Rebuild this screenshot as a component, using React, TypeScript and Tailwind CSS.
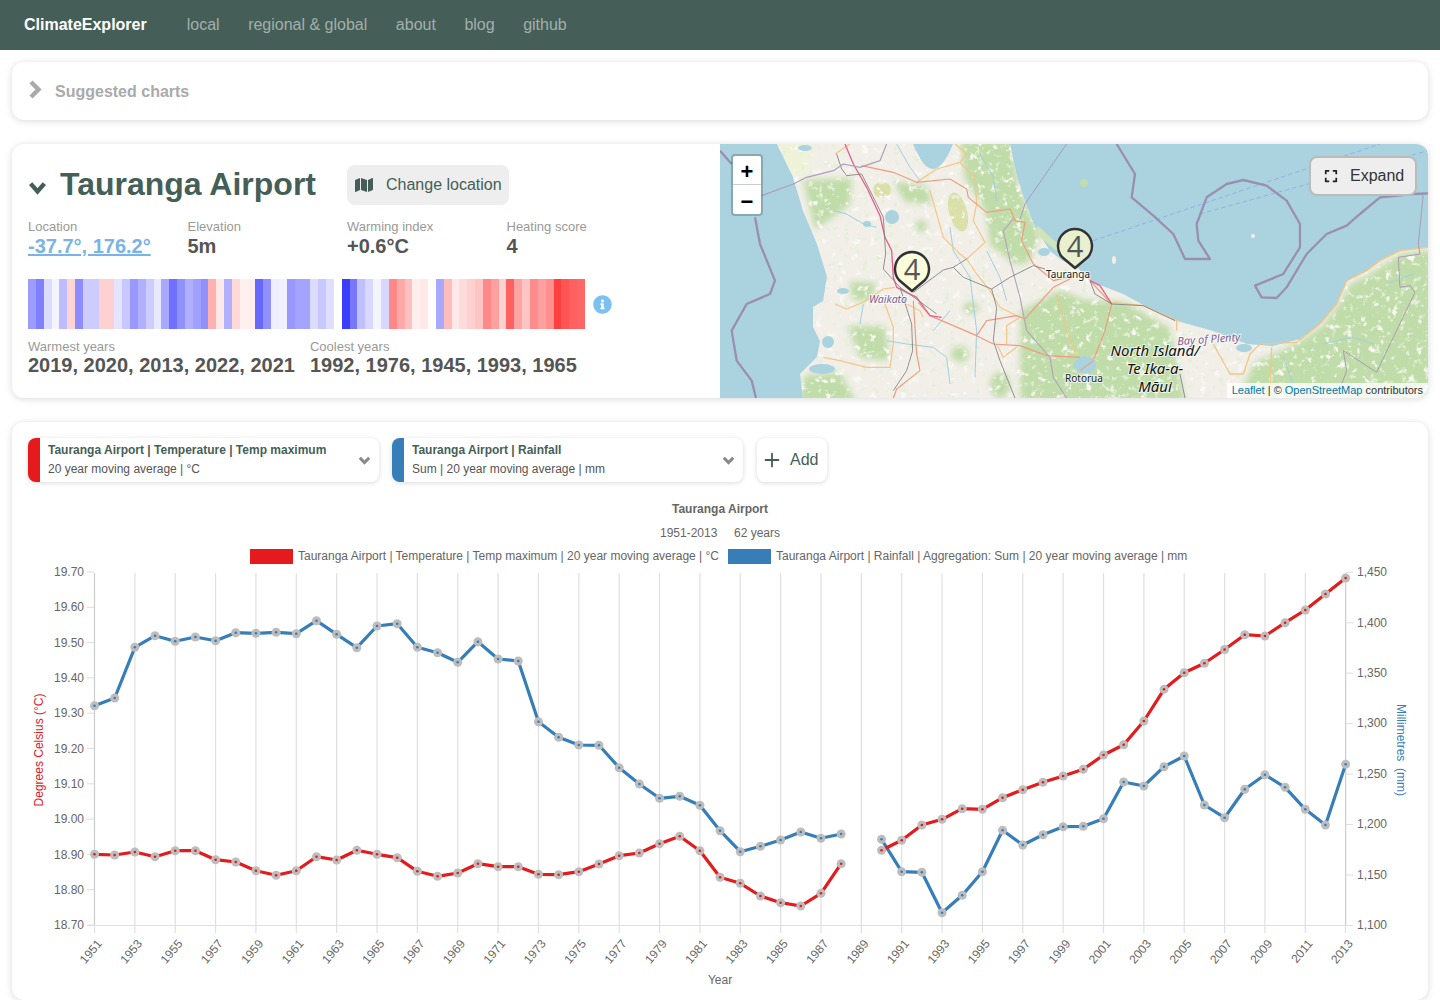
import { FaExpand, FaInfoCircle, FaMap } from "react-icons/fa";
import { Plus } from "lucide-react";

// warming stripes, 1951 on
const stripes = [
  "#9c9cff", "#8080ff", "#dcdcff", "#f4f4ff", "#bcbcff", "#ffd4d4", "#8c8cff", "#ccccff", "#ccccff", "#ffd0d0",
  "#ffd0d0", "#e4e4ff", "#c8c8ff", "#9898ff", "#b0b0ff", "#ccccff", "#e8e8ff", "#a8a8ff", "#7070ff", "#9090ff",
  "#b0b0ff", "#a0a0ff", "#9090ff", "#ffb0b0", "#ffe8e8", "#b0b0ff", "#ffd8d8", "#fff0f0", "#ffeeee", "#6868ff",
  "#9090ff", "#eeeeff", "#f0f0ff", "#9898ff", "#a4a4ff", "#a4a4ff", "#dcdcff", "#c8c8ff", "#dedeff", "#ffffff",
  "#3c3cff", "#7878ff", "#c0c0ff", "#d8d8ff", "#f4f4ff", "#d8d8ff", "#ff8888", "#ffa8a8", "#ffc0c0", "#ffeeee",
  "#ffe8e8", "#fffcfc", "#a8a8ff", "#ffbcbc", "#ffe8e8", "#ffdcdc", "#ffd0d0", "#ffc4c4", "#ff8888", "#ffa0a0",
  "#ffd0d0", "#ff6060", "#ffa4a4", "#ffc4c4", "#ff8c8c", "#ffa0a0", "#ff9090", "#ff4040", "#ff5555", "#ff6060",
  "#ff6666",
];

// y positions by year, 1951-2013; null for the gap in 1989
const red = [
  854.3, 855, 852, 856.7, 850.7, 850.7, 859.7, 862, 870.7, 875.3, 870.7, 856.7, 860, 850.3, 854.3, 857.7, 871.3, 876.3,
  873, 863.7, 866.7, 866.7, 874.3, 874.7, 871.7, 864, 855.7, 853, 843.7, 836.3, 850.7, 877.3, 883.3, 896, 902.7, 906,
  893.3, 863.7, null, 850.2, 840.2, 825, 819.3, 808.7, 809.3, 797.7, 789.7, 782.3, 776, 769.3, 755, 744.7, 721, 689.3,
  672.7, 663.3, 649.5, 634.7, 636, 622.7, 610, 594, 578,
];
const blue = [
  705.7, 698, 647.3, 635.7, 641.3, 637, 640.7, 632.7, 633.3, 632.3, 633.7, 620.7, 634.3, 647.7, 626, 623.7, 647.3,
  652.7, 662.3, 641.7, 659, 661, 721.7, 737.3, 745, 745.3, 767.7, 784, 798.3, 796.3, 805.3, 830.7, 851.7, 846.3, 840,
  832, 838.3, 834, null, 839.3, 871.7, 872.3, 912.7, 895.3, 871.7, 830.3, 845, 834.7, 826.7, 826.3, 818.7, 782, 786,
  766.7, 756, 805, 817.7, 789.3, 774.7, 787.3, 809.3, 825, 764.3,
];

const xOf = (i: number) => 94.5 + i * 20.18;

function segments(data: (number | null)[]) {
  const out: string[] = [];
  let cur: string[] = [];
  data.forEach((y, i) => {
    if (y === null) {
      out.push(cur.join(" "));
      cur = [];
    } else cur.push(`${xOf(i)},${y}`);
  });
  out.push(cur.join(" "));
  return out;
}

function Series({ data, color }: { data: (number | null)[]; color: string }) {
  return (
    <g>
      {segments(data).map((pts) => (
        <polyline key={pts} points={pts} fill="none" stroke={color} strokeWidth={3.2} strokeLinejoin="round" />
      ))}
      {data.map((y, i) =>
        y === null ? null : (
          <g key={i}>
            <circle cx={xOf(i)} cy={y} r={4.5} fill="#bdbdbd" />
            <circle cx={xOf(i)} cy={y} r={1.3} fill={color} />
          </g>
        )
      )}
    </g>
  );
}

function Chart() {
  const left = ["19.70", "19.60", "19.50", "19.40", "19.30", "19.20", "19.10", "19.00", "18.90", "18.80", "18.70"];
  const right = ["1,450", "1,400", "1,350", "1,300", "1,250", "1,200", "1,150", "1,100"];
  const years = Array.from({ length: 32 }, (_, i) => 1951 + i * 2);
  return (
    <svg viewBox="12 482 1416 518" className="block w-[1416px] h-[518px] -mx-4 text-[12px]" fill="#666">
      <text x={720} y={513} textAnchor="middle" fontWeight="bold">Tauranga Airport</text>
      <text x={720} y={537} textAnchor="middle" xmlSpace="preserve">1951-2013     62 years</text>
      <rect x={250} y={549} width={43} height={15} fill="#e41a1c" />
      <text x={298} y={560}>Tauranga Airport | Temperature | Temp maximum | 20 year moving average | °C</text>
      <rect x={728} y={549} width={43} height={15} fill="#377eb8" />
      <text x={776} y={560}>Tauranga Airport | Rainfall | Aggregation: Sum | 20 year moving average | mm</text>

      {years.map((_, i) => (
        <line key={i} x1={xOf(i * 2)} x2={xOf(i * 2)} y1={573} y2={i === 0 || i === 31 ? 925 : 933} stroke={i === 0 || i === 31 ? "#ccc" : "#e0e0e0"} strokeWidth={1.2} />
      ))}
      <line x1={94.5} x2={94.5} y1={925} y2={933} stroke="#e0e0e0" strokeWidth={1.2} />
      <line x1={1345.5} x2={1345.5} y1={925} y2={933} stroke="#e0e0e0" strokeWidth={1.2} />
      <line x1={87} x2={1353} y1={925.5} y2={925.5} stroke="#e0e0e0" />

      {left.map((t, i) => {
        const y = 572 + i * 35.3;
        return (
          <g key={t}>
            <line x1={87} x2={94} y1={y} y2={y} stroke="#ddd" />
            <text x={84} y={y + 4.1} textAnchor="end">{t}</text>
          </g>
        );
      })}
      {right.map((t, i) => {
        const y = 572.3 + i * 50.45;
        return (
          <g key={t}>
            <line x1={1346} x2={1353} y1={y} y2={y} stroke="#ddd" />
            <text x={1357} y={y + 3.8}>{t}</text>
          </g>
        );
      })}
      {years.map((y, i) => (
        <text key={y} x={0} y={0} textAnchor="end" transform={`translate(${xOf(i * 2) + 8} 944) rotate(-50)`}>{y}</text>
      ))}

      <text transform="translate(43 750) rotate(-90)" textAnchor="middle" fill="#e41a1c">Degrees Celsius (°C)</text>
      <text transform="translate(1397 750) rotate(90)" textAnchor="middle" fill="#377eb8" xmlSpace="preserve">Millimetres  (mm)</text>
      <text x={720} y={984} textAnchor="middle">Year</text>

      <Series data={blue} color="#377eb8" />
      <Series data={red} color="#e41a1c" />
    </svg>
  );
}

// roads and boundaries are traced off 3x crops, so they stay in crop units
const salmonW = [
  "M425 65L520 85L590 115L690 105L740 135L745 160L800 205L870 195L885 230L915 235L905 290L940 360L1000 410L1065 395",
  "M595 475L630 515L700 545L770 575L800 530L890 515L915 525L1000 430L1060 400",
  "M580 470L590 630L600 680L530 735L520 762",
  "M770 575L820 600L900 605L980 635L1080 640",
];
const orangeW = [
  "M590 115L650 75L720 55L740 30L705 0",
  "M720 55L765 100L770 180L760 230L795 295L740 345L770 390L810 440L840 490L890 515",
  "M630 140L670 280L720 330L740 345",
  "M345 480L380 495L430 475L490 435L525 430",
  "M495 480L520 550L520 600L510 670L440 670L360 650L310 640",
  "M860 600L860 545L900 520",
  "M1010 450L1040 560L1070 640",
  "M345 30L390 0",
  "M560 480L600 500L610 520",
  "M830 600L850 640L890 610",
];
const greyW = [
  "M350 30L365 75L380 95L425 90L490 220L497 330L490 375L540 430L575 455L650 510",
  "M540 430L575 540L578 620L560 680L520 740",
  "M580 445L670 378L700 370L740 345",
  "M700 370L730 400L815 435L830 490L820 590L840 650L885 762",
  "M815 435L870 400L940 365L975 375",
];
const riversW = [
  "M690 250L700 320L750 400L770 560L765 700",
  "M340 200L380 210L430 240L470 250",
  "M430 480L420 540",
  "M500 590L560 600L640 610L680 640L690 720",
  "M800 320L840 400L860 470",
  "M530 0L570 70L600 110",
  "M780 30L820 100L830 170",
  "M690 500L640 560",
];

const landPath =
  "M777 144L793 177L803 211L817 244L827 277L823 301L813 307L813 327L820 341L817 357L800 374L803 398L1428 398L1428 247L1400 251L1380 261L1367 271L1347 281L1337 304L1320 324L1300 339L1273 346L1247 344L1213 331L1177 321L1147 307L1123 294L1090 281L1077 267L1063 261L1050 251L1035 227L1027 207L1017 177L1010 144L953 144Q933 194 913 144Z";

function Pin({ x, y, fill }: { x: number; y: number; fill: string }) {
  return (
    <g transform={`translate(${x} ${y})`}>
      <path d="M0 0L-13 -11A17 17 0 1 1 13 -11Z" fill={fill} stroke="#333" strokeWidth={2.5} strokeLinejoin="round" />
      <text x={0} y={-11} textAnchor="middle" fontSize={29} fill="#555" className="font-['Open_Sans',sans-serif]">4</text>
    </g>
  );
}

function TerrainMap() {
  return (
    <svg viewBox="720 144 708 254" className="block w-full h-full bg-[#aad3df]">
      <defs>
        <clipPath id="land">
          <path d={landPath} />
        </clipPath>
        <filter id="soft">
          <feGaussianBlur stdDeviation="3" />
        </filter>
        <filter id="tile">
          <feGaussianBlur stdDeviation="0.35" />
        </filter>
        {/* thresholded noise: farmland flecks in green, clearings in land colour */}
        <filter id="flecks" x="0" y="0" width="100%" height="100%">
          <feTurbulence type="fractalNoise" baseFrequency="0.16" numOctaves="3" seed="4" />
          <feColorMatrix values="0 0 0 0 0.76  0 0 0 0 0.87  0 0 0 0 0.68  7 0 0 0 -4.4" />
          <feGaussianBlur stdDeviation="0.4" />
        </filter>
        <filter id="clearings" x="0" y="0" width="100%" height="100%">
          <feTurbulence type="fractalNoise" baseFrequency="0.13" numOctaves="3" seed="11" />
          <feColorMatrix values="0 0 0 0 0.95  0 0 0 0 0.94  0 0 0 0 0.91  7 0 0 0 -4.4" />
          <feGaussianBlur stdDeviation="0.5" />
        </filter>
      </defs>

      <path d={landPath} fill="#f2efe9" />
      <g clipPath="url(#land)">
        <g fill="#c0dca8" filter="url(#soft)">
          <path d="M960 140L1012 140L1017 177L1027 207L1040 235L1030 262L1015 265L990 245L985 210L965 180Z" />
          <path d="M1020 311L1060 290L1085 300L1125 302L1170 328L1185 402L1020 402Z" />
          <path d="M1235 402L1255 362L1282 350L1302 340L1322 326L1340 302L1350 284L1370 274L1400 254L1432 250L1432 402Z" />
          <path d="M850 281L877 283L870 301L852 300Z" />
          <path d="M847 326L885 326L890 361L860 358Z" />
          <path d="M798 402L805 375L840 372L856 402Z" />
          <path d="M803 180L852 178L850 205L815 230Z" />
          <path d="M893 181L927 186L932 205L905 202Z" />
          <ellipse cx={921} cy={226} rx={6} ry={6} />
          <ellipse cx={960} cy={354} rx={9} ry={8} />
          <ellipse cx={971} cy={308} rx={8} ry={6} />
          <ellipse cx={1000} cy={385} rx={10} ry={13} />
        </g>
        <g fill="#d9e0a8" filter="url(#tile)">
          <ellipse cx={958} cy={212} rx={9} ry={20} transform="rotate(-15 958 212)" />
          <ellipse cx={882} cy={190} rx={9} ry={8} />
        </g>
        <path d="M775 142L812 142L808 172L792 177Z" fill="#eef3d8" filter="url(#soft)" />
        <rect x={720} y={144} width={708} height={254} filter="url(#clearings)" />
        <rect x={720} y={144} width={708} height={254} filter="url(#flecks)" />
      </g>
      <path d="M1038 226L1078 262L1072 264L1034 232Z" fill="#cfe4b8" />
      <g fill="#aad3df" filter="url(#tile)">
        <ellipse cx={892} cy={217} rx={7} ry={7} />
        <ellipse cx={867} cy={224} rx={4} ry={3} />
        <ellipse cx={843} cy={291} rx={6} ry={3} />
        <ellipse cx={828} cy={342} rx={6} ry={6} />
        <ellipse cx={822} cy={369} rx={13} ry={5} />
        <ellipse cx={1085} cy={365} rx={11} ry={9} />
        <ellipse cx={1244} cy={348} rx={8} ry={4} />
        <ellipse cx={1044} cy={252} rx={6} ry={4} />
        <ellipse cx={805} cy={148} rx={7} ry={3} />
      </g>
      <circle cx={1253} cy={236} r={2} fill="#f2efe9" />
      <ellipse cx={1114} cy={260} rx={2} ry={4} fill="#f2efe9" />
      <ellipse cx={1084} cy={183} rx={4} ry={4} fill="#c3dcab" />

      <g transform="translate(720 144) scale(0.3333)" fill="none" strokeLinejoin="round" filter="url(#tile)">
        {riversW.map((d) => <path key={d} d={d} stroke="#a2cde2" strokeWidth={3} />)}
        {orangeW.map((d) => <path key={d} d={d} stroke="#f5c584" strokeWidth={3.5} />)}
        {salmonW.map((d) => <path key={d} d={d} stroke="#ef9b80" strokeWidth={3.5} />)}
        <path d="M880 225L850 260L870 350L900 460L920 560L990 640L1000 700L1040 762" stroke="#b3a6b8" strokeWidth={3.5} />
        <path d="M375 0L400 60L440 130L480 215L495 280L515 320L520 400L530 430L590 460L630 515L665 520" stroke="#e5608c" strokeWidth={4} />
        {greyW.map((d) => <path key={d} d={d} stroke="#7d7d7d" strokeWidth={2.5} />)}
        <path d="M0 20L35 60M105 220L120 300L165 410L150 450L80 480L35 560L50 650L95 710L108 762" stroke="#9b8fb0" strokeWidth={7} />
        <path d="M125 155L220 120L260 100L340 80L370 60L420 70L480 50L500 0" stroke="#ad9fbb" strokeWidth={3.5} />
        <path d="M1040 0L915 180L900 225" stroke="#a79cb8" strokeWidth={3} />
      </g>
      <g transform="translate(1080 144) scale(0.3333)" fill="none" strokeLinejoin="round" filter="url(#tile)">
        <path d="M40 290L900 0M360 210L1044 20" stroke="#8aa9ef" strokeWidth={2.5} strokeDasharray="14 8" />
        <path
          d="M110 0L165 90L155 160L220 215L280 270L315 345L390 345L355 290L350 240L380 160L440 120L490 108L560 125L620 170L660 240L660 310L610 390L525 425L545 460L590 462L620 430L680 330L740 270L800 245L840 210L900 160L1000 150L1044 148"
          stroke="#9b8fb0"
          strokeWidth={7}
        />
        <path d="M100 475L190 485L290 530L290 560M400 600L450 690L490 690L510 630L540 600L650 595L720 540L770 480L800 410L860 380L900 350L960 320L1044 310M575 610L570 762" stroke="#f5c584" strokeWidth={4} />
        <path d="M30 410L95 480L75 560L40 650L0 680" stroke="#ef9b80" strokeWidth={3.5} />
        <path d="M30 410L60 425L95 480" stroke="#e5608c" strokeWidth={4} />
        <path d="M30 410L45 450L95 480L190 485L285 530" stroke="#7d7d7d" strokeWidth={2.5} />
        <path d="M1030 150L1015 300L1020 330L955 340L960 430L990 425L1005 445L890 685L790 620L800 680L770 762" stroke="#ab9cb4" strokeWidth={3} />
        <path d="M300 690L315 762" stroke="#7d7d7d" strokeWidth={2.5} />
        <path d="M730 600L820 580L880 600M610 640L640 720M920 420L1000 390" stroke="#a2cde2" strokeWidth={3} />
      </g>

      <Pin x={912} y={291} fill="#fbfcdc" />
      <Pin x={1075} y={268} fill="#e8f0d0" />

      <g className="font-['Noto_Sans',sans-serif] [paint-order:stroke]" stroke="#fff" strokeWidth={2} strokeOpacity={0.7}>
        <text x={888} y={303} textAnchor="middle" fontSize={10.5} fontStyle="italic" fill="#7c5f92">Waikato</text>
        <text x={1068} y={278} textAnchor="middle" fontSize={10} fill="#222">Tauranga</text>
        <text x={1084} y={382} textAnchor="middle" fontSize={10} fill="#222">Rotorua</text>
        <text x={1209} y={343} textAnchor="middle" fontSize={11} fontStyle="italic" fill="#7c5f92" transform="rotate(-4 1209 343)">Bay of Plenty</text>
        <g fontSize={15} fontStyle="italic" fill="#111" textAnchor="middle">
          <text x={1155} y={356}>North Island/</text>
          <text x={1155} y={374}>Te Ika-a-</text>
          <text x={1155} y={392}>Māui</text>
        </g>
      </g>
    </svg>
  );
}

function ChevronRightIcon() {
  return (
    <svg width="14" height="19" viewBox="0 0 14 19" className="-mt-1 text-[#aaa]">
      <polyline points="3,2 10.5,9.5 3,17" fill="none" stroke="currentColor" strokeWidth="4.4" />
    </svg>
  );
}

function ChevronDownIcon({ w, h, sw, className }: { w: number; h: number; sw: number; className: string }) {
  return (
    <svg width={w} height={h} viewBox={`0 0 ${w} ${h}`} className={className}>
      <polyline points={`${sw * 0.6},${sw * 0.6} ${w / 2},${h - sw * 0.8} ${w - sw * 0.6},${sw * 0.6}`} fill="none" stroke="currentColor" strokeWidth={sw} />
    </svg>
  );
}

function Stat({ label, value, link, tight }: { label: string; value: string; link?: boolean; tight?: boolean }) {
  return (
    <div>
      <div className="-mt-px mb-px text-[13px] leading-[15px] text-[#999]">{label}</div>
      <div className={`text-xl leading-[22px] font-bold ${tight ? "-mt-px" : ""} ${link ? "text-[#7ab3e6] underline" : "text-[#555]"}`}>{value}</div>
    </div>
  );
}

function SeriesPicker({ color, title, sub }: { color: string; title: string; sub: string }) {
  return (
    <div className={`flex items-center w-[351px] h-11 rounded-lg border-l-12 bg-white shadow-[0_1px_5px_rgba(0,0,0,0.15)] ${color}`}>
      <div className="flex-1 pl-2 text-xs">
        <div className="font-bold leading-[19px] text-[#455f58]">{title}</div>
        <div className="leading-[19px] text-[#555]">{sub}</div>
      </div>
      <ChevronDownIcon w={13} h={9} sw={3} className="mr-2 text-[#888]" />
    </div>
  );
}

export default function App() {
  return (
    <div className="h-[1000px] overflow-hidden bg-white font-['Liberation_Sans',Arial,sans-serif]">
      <header className="flex items-center h-[50px] px-6 bg-[#455f58]">
        <span className="font-bold text-white">ClimateExplorer</span>
        <nav className="flex gap-[28.5px] ml-10 text-[#a2afab]">
          <span>local</span>
          <span>regional &amp; global</span>
          <span>about</span>
          <span>blog</span>
          <span>github</span>
        </nav>
      </header>

      <main className="flex flex-col gap-6 px-3 pt-3">
        <section className="flex items-center h-[58px] px-4 rounded-xl bg-white shadow-[0_1px_7px_rgba(0,0,0,0.15)]">
          <ChevronRightIcon />
          <span className="ml-[13px] pt-0.5 font-bold text-[#aaa]">Suggested charts</span>
        </section>

        <section className="flex h-[254px] rounded-xl bg-white shadow-[0_1px_7px_rgba(0,0,0,0.15)]">
          <div className="w-[708px] px-4 pt-[21px]">
            <div className="flex items-center h-10">
              <ChevronDownIcon w={19} h={14} sw={4.4} className="mt-1.5 text-[#455f58]" />
              <h1 className="-mt-0.5 ml-[13px] text-[32px] font-bold text-[#455f58]">Tauranga Airport</h1>
              <button className="flex items-center w-[162px] h-10 ml-[31px] pl-2 rounded-lg bg-[#eee] text-[#455f58]">
                <FaMap size={18} />
                <span className="ml-[13px]">Change location</span>
              </button>
            </div>
            <div className="grid grid-cols-4 w-[638px] mt-[15px]">
              <Stat label="Location" value="-37.7°, 176.2°" link />
              <Stat label="Elevation" value="5m" />
              <Stat label="Warming index" value="+0.6°C" />
              <Stat label="Heating score" value="4" />
            </div>
            <div className="flex items-center mt-[22px]">
              <div className="flex w-[557px] h-[50px]">
                {stripes.map((c, i) => (
                  <div key={i} className="flex-1" style={{ backgroundColor: c }} />
                ))}
              </div>
              <FaInfoCircle className="mt-px ml-2 text-[#7cc0f2]" size={19} />
            </div>
            <div className="flex gap-[15px] mt-[11px]">
              <Stat label="Warmest years" value="2019, 2020, 2013, 2022, 2021" tight />
              <Stat label="Coolest years" value="1992, 1976, 1945, 1993, 1965" tight />
            </div>
          </div>
          <div className="relative flex-1 overflow-hidden rounded-r-xl">
            <TerrainMap />
            <div className="absolute left-[11px] top-[10px] w-[32px] rounded bg-white border-2 border-black/20 bg-clip-padding text-black">
              <div className="flex items-center justify-center h-[29px] pt-1 border-b border-[#ccc] text-[22px] font-bold leading-none">+</div>
              <div className="flex items-center justify-center h-[29px] pt-1 text-[22px] font-bold leading-none">−</div>
            </div>
            <div className="absolute right-[11px] top-3 flex items-center w-[108px] h-10 pl-[13px] rounded-lg border-2 border-[#bbb] bg-[#eee] text-[#333]">
              <FaExpand className="text-[#222]" size={14} />
              <span className="ml-3">Expand</span>
            </div>
            <div className="absolute right-0 bottom-0 px-[5px] h-[15px] bg-white/80 text-[11px] leading-[15px] text-[#333]">
              <span className="text-[#0078a8]">Leaflet</span> | © <span className="text-[#0078a8]">OpenStreetMap</span> contributors
            </div>
          </div>
        </section>

        <section className="px-4 pt-4 rounded-xl bg-white shadow-[0_1px_7px_rgba(0,0,0,0.15)]">
          <div className="flex items-center">
            <SeriesPicker color="border-[#e41a1c]" title="Tauranga Airport | Temperature | Temp maximum" sub="20 year moving average | °C" />
            <div className="ml-[13px]">
              <SeriesPicker color="border-[#377eb8]" title="Tauranga Airport | Rainfall" sub="Sum | 20 year moving average | mm" />
            </div>
            <button className="flex items-center w-[70px] h-11 ml-[14px] pl-[3.5px] rounded-lg bg-white text-[#455f58] shadow-[0_1px_5px_rgba(0,0,0,0.15)]">
              <Plus size={22} />
              <span className="ml-[7.5px]">Add</span>
            </button>
          </div>
          <Chart />
        </section>
      </main>
    </div>
  );
}
